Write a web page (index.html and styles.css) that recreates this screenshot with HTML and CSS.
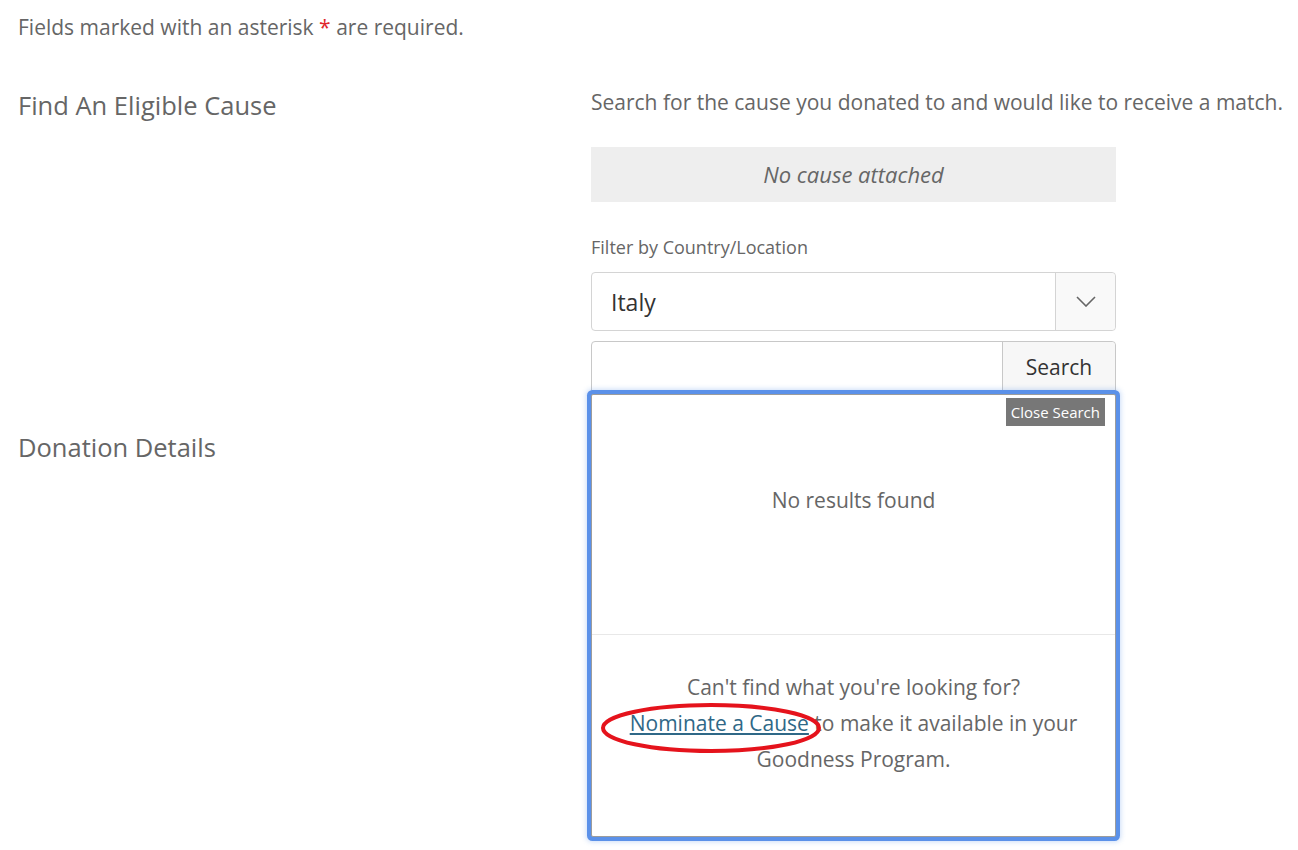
FILE: index.html
```html
<!DOCTYPE html>
<html>
<head>
	<title>Request a Match</title>
	<meta charset="utf-8">
	<link rel="stylesheet" href="styles.css">
</head>
<body>
	<div class="page">
		<p class="note">Fields marked with an asterisk <span class="req">*</span> are required.</p>

		<div class="section cause">
			<h2 class="section-title">Find An Eligible Cause</h2>
			<div class="section-body">
				<p class="hint">Search for the cause you donated to and would like to receive a match.</p>
				<div class="attached">No cause attached</div>
				<label class="field-label">Filter by Country/Location</label>
				<div class="select">
					<span class="select-value">Italy</span>
					<span class="select-arrow">
						<svg width="20" height="11" viewBox="0 0 20 11"><path d="M1 1 L10 10 L19 1" fill="none" stroke="#666" stroke-width="1.6"/></svg>
					</span>
				</div>
				<div class="search-row">
					<input class="search-input" type="text">
					<button class="search-btn">Search</button>
					<!-- results popup -->
					<div class="results">
						<span class="close-search">Close Search</span>
						<div class="results-empty">No results found</div>
						<div class="results-foot">
							Can't find what you're looking for?<br>
							<span class="mark"><a href="#" class="link">Nominate a Cause</a><svg class="circle" width="222" height="52" viewBox="0 0 222 52"><ellipse cx="111" cy="26" rx="108" ry="23" fill="none" stroke="#e5131c" stroke-width="4"/></svg></span> to make it available in your Goodness Program.
						</div>
					</div>
				</div>
			</div>
		</div>

		<div class="section donation">
			<h2 class="section-title">Donation Details</h2>
			<div class="section-body"></div>
		</div>
	</div>
</body>
</html>
```

FILE: styles.css
```css
*{margin:0;padding:0;box-sizing:border-box;}
body{font-family:"Open Sans","Liberation Sans",sans-serif;color:#666;background:#fff;}
.page{padding:16px 0 0 18px;width:1298px;min-height:850px;}
.note{font-size:21px;line-height:22px;}
.req{color:#e0262b;}

.section{display:grid;grid-template-columns:573px 525px;}
.section-title{font-size:25.5px;font-weight:normal;line-height:30px;}
.cause{margin-top:50px;}
.cause .section-title{margin-top:2px;}
.hint{font-size:21px;line-height:26px;white-space:nowrap;margin-top:1px;}

.attached{margin-top:32px;height:55px;background:#eee;font-style:italic;font-size:22px;text-align:center;line-height:55px;}

.field-label{display:block;margin-top:34px;font-size:18px;line-height:22px;}
.select{margin-top:14px;height:59px;border:1px solid #d4d4d4;border-radius:4px;display:flex;align-items:center;}
.select-value{flex:1;padding-left:19px;font-size:23px;color:#333;}
.select-arrow{width:60px;height:100%;border-left:1px solid #d4d4d4;background:#f9f9f9;border-radius:0 4px 4px 0;display:flex;align-items:center;justify-content:center;}

.search-row{position:relative;margin-top:10px;height:54px;border:1px solid #c8c8c8;border-radius:4px 4px 0 0;display:flex;}
.search-input{flex:1;border:0;outline:0;background:transparent;}
.search-btn{width:113px;border:0;border-left:1px solid #c8c8c8;background:#f7f7f7;font-family:inherit;font-size:21px;color:#333;padding-bottom:2px;border-radius:0 4px 0 0;}

.results{position:absolute;left:-1px;right:-1px;top:52px;height:443px;background:#fff;border:1px solid #9c9c9c;border-radius:2px;box-shadow:0 0 0 4px #5b91e9,0 0 5px 5px rgba(91,145,233,.3);z-index:2;}
.close-search{position:absolute;top:3px;right:10px;background:#777;color:#fff;font-size:15px;line-height:28px;padding:0 5px;}
.results-empty{height:240px;border-bottom:1px solid #e8e8e8;text-align:center;font-size:21px;padding-top:91px;}
.results-foot{padding:34px 30px 0;text-align:center;font-size:21px;line-height:36px;}
.link{color:#2f6887;}
.mark{position:relative;}
.circle{position:absolute;left:-30px;top:-7px;}

.donation{margin-top:37px;}
```
